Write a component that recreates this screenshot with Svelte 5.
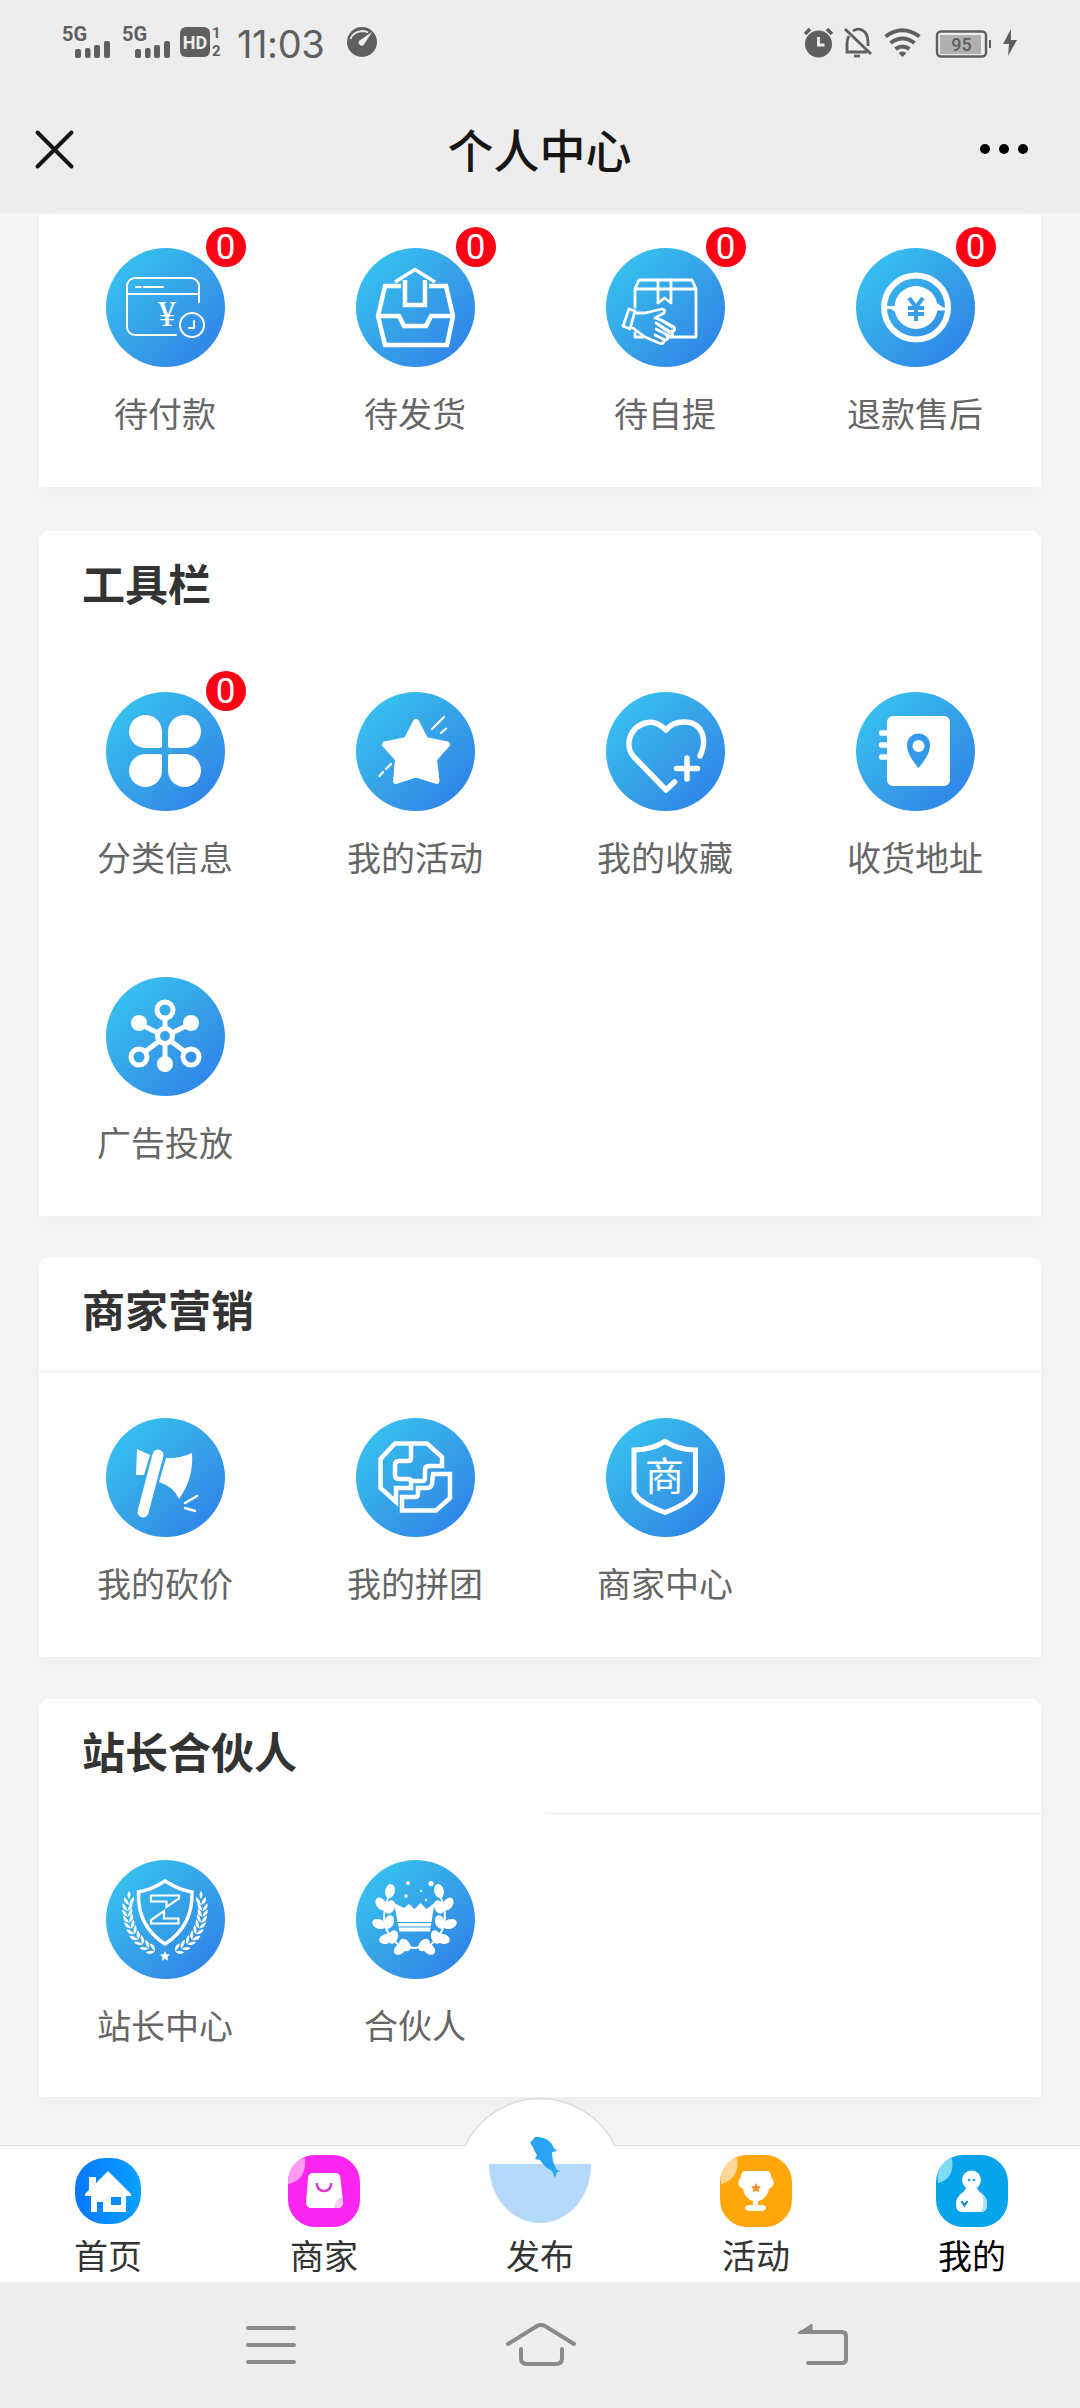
<script lang="ts">
	type Entry = { icon: string; label: string; badge?: number };
	type Section = { id: string; title?: string; divider?: 'full' | 'half'; items: Entry[] };

	const sections: Section[] = [
		{
			id: 'orders',
			items: [
				{ icon: 'pay', label: '待付款', badge: 0 },
				{ icon: 'send', label: '待发货', badge: 0 },
				{ icon: 'pickup', label: '待自提', badge: 0 },
				{ icon: 'refund', label: '退款售后', badge: 0 }
			]
		},
		{
			id: 'tools',
			title: '工具栏',
			items: [
				{ icon: 'clover', label: '分类信息', badge: 0 },
				{ icon: 'star', label: '我的活动' },
				{ icon: 'heart', label: '我的收藏' },
				{ icon: 'address', label: '收货地址' },
				{ icon: 'hub', label: '广告投放' }
			]
		},
		{
			id: 'marketing',
			title: '商家营销',
			divider: 'full',
			items: [
				{ icon: 'axe', label: '我的砍价' },
				{ icon: 'puzzle', label: '我的拼团' },
				{ icon: 'merchant', label: '商家中心' }
			]
		},
		{
			id: 'partner',
			title: '站长合伙人',
			divider: 'half',
			items: [
				{ icon: 'master', label: '站长中心' },
				{ icon: 'crown', label: '合伙人' }
			]
		}
	];

	const tabs = [
		{ icon: 'home', label: '首页' },
		{ icon: 'shop', label: '商家' },
		{ icon: 'publish', label: '发布' },
		{ icon: 'trophy', label: '活动' },
		{ icon: 'me', label: '我的' }
	];

	let active = $state('me');

	// left half of the wreath: x, y, direction of growth in degrees
	const wreath = [
		[22, 41, 0],
		[20.5, 47, -2],
		[20.5, 53, -6],
		[21.5, 59, -10],
		[23, 65, -16],
		[25.5, 71, -24],
		[29, 77, -34],
		[33.5, 82, -44],
		[39, 87, -54],
		[45, 90.5, -64]
	];

	// left half of the leaf ring round the crown: x, y, angle
	const leaves = [
		[34, 31, 15],
		[25, 44, -35],
		[34, 47, 25],
		[23, 64, -70],
		[33, 62, 20],
		[30, 79, 75],
		[37, 77, 20],
		[44, 89, 50],
		[49, 85, -40]
	];
</script>

{#snippet icon(name: string)}
	<svg class="glyph" viewBox="0 0 119 119">
		{#if name === 'pay'}
			<g class="line" stroke-width="2">
				<path d="M93 54V38a8 8 0 0 0-8-8H29a8 8 0 0 0-8 8v41a8 8 0 0 0 8 8h41M21 46h72M30 39h5M38 39h19" />
				<circle cx="86" cy="77" r="12" />
				<path d="M88 73v7h-5" />
			</g>
			<text class="serif" x="61" y="78" font-size="36">¥</text>
		{:else if name === 'send'}
			<g class="line sharp" stroke-width="4.5">
				<path d="M45 38H29l-7 30 7 29h62l6-29-7-30H73" />
				<path d="M22 68h21l5 10h22l5-10h22" />
				<path d="M49 32v25h20V32" />
				<path d="M39 34l20-12.500 20 12.500" stroke-width="3.500" />
			</g>
		{:else if name === 'pickup'}
			<g class="line" stroke-width="2.800">
				<path d="M29 59V41l4-9h53l4 9v48H64M29 41h61M29 85v4h8" />
				<path d="M52 32v23l6.500-5 6.500 5V32" />
				<path d="M23 61l6 2-5 18-7-3z" />
				<path d="M30 65l9 0 17-4q4 1 2 4l-9 5 6 2 13 7q2 4-2 4M50 75l16 10q2 4-3 3L50 81M61 88q2 4-2 4l-10-5M58 92q0 5-5 3l-14-6-12-9" />
				<path d="M55 72l11 7M53 77l11 8" />
			</g>
		{:else if name === 'refund'}
			<circle class="line" cx="60" cy="59.500" r="32" stroke-width="6" />
			<circle class="fill" cx="60" cy="59.500" r="21.500" />
			<path class="fill" d="M32 59l13 9-2-9zM88 60L74 50l2 11z" />
			<path class="line" d="M32 59.500h7M81 61h7" stroke-width="3" />
			<path class="ink" d="M53 50l7 9 7-9M60 59v14M52 60h16M52 66h16" stroke-width="4" />
		{:else if name === 'clover'}
			<g class="fill">
				<path d="M39.500 23A16.500 16.500 0 0 1 56 39.500V54q0 2-2 2H39.500a16.500 16.500 0 0 1 0-33z" />
				<path d="M78.500 23A16.500 16.500 0 0 0 62 39.500V54q0 2 2 2h14.500a16.500 16.500 0 0 0 0-33z" />
				<path d="M39.500 95A16.500 16.500 0 0 0 56 78.500V64q0-2-2-2H39.500a16.500 16.500 0 0 0 0 33z" />
				<path d="M78.500 95A16.500 16.500 0 0 1 62 78.500V64q0-2 2-2h14.500a16.500 16.500 0 0 1 0 33z" />
			</g>
		{:else if name === 'star'}
			<path class="solid" d="M60 30l9.500 18L91 52.500 78 67l2.500 22L60 82.500 40 89l2-22-13-14.500L50.500 48z" stroke-width="6" />
			<path class="line" d="M76 37l12-12M85 41l5-4.500M35 72l-5 5M27 80l-3.500 4" stroke-width="2.200" />
		{:else if name === 'heart'}
			<g class="line" stroke-width="5.500">
				<path d="M94 64C102 47 96 31 80 30Q67 29 60 38Q51 29 42 30.500C23 34 18 54 28 65L60 98l8.500-8" />
				<path d="M81 66v21M70.500 76.500h21" />
			</g>
		{:else if name === 'address'}
			<rect class="fill" x="31" y="24" width="63" height="70" rx="6" />
			<path class="line" d="M25.500 41H32M25.500 53H32M25.500 65H32" stroke-width="5.500" />
			<path class="hole" d="M62.500 76C54 66 51 59 51 53a11.500 11.500 0 0 1 23 0c0 6-3 13-11.500 23z" />
			<circle class="fill" cx="62.500" cy="54" r="6" />
		{:else if name === 'hub'}
			<g class="line" stroke-width="5">
				<circle cx="59" cy="59" r="7.500" />
				<circle cx="59" cy="33" r="8" />
				<circle cx="33" cy="80" r="8" />
				<circle cx="85" cy="80" r="8" />
				<path d="M59 42v9M59 67v12M40 50l12 6M78 50l-12 6M40 74l12-9M78 74l-12-9" />
			</g>
			<g class="fill">
				<circle cx="33" cy="46" r="8" />
				<circle cx="85" cy="46" r="8" />
				<circle cx="59" cy="87" r="8" />
			</g>
		{:else if name === 'axe'}
			<path class="line" d="M52 37L37 94" stroke-width="11" />
			<path class="fill" d="M31 31l13 6-6 20h-8zM60 40q13 1 26-5 2 25-13 46-5-12-20-17z" />
			<path class="line" d="M79 85l12-7M79 90l10 3" stroke-width="2.500" />
		{:else if name === 'puzzle'}
			<g class="line sharp" stroke-width="4.500">
				<path d="M55 25v15q0 3-3 3h-9q-4 0-4 4v10q0 4 4 4h9q3 0 3 3v6H40v14L24.500 70V41L39 25.500h32L86 39v9H73q-4 0-4 4v8q0 3-3 3H55" />
				<path d="M77 56h17v24L80 92.500H46V79h13q3 0 3-3v-6h9q4 0 5-4z" />
			</g>
		{:else if name === 'merchant'}
			<path class="line sharp" d="M59 23.500Q45 32 28 32v42q5 11 31 20.500Q84 85 89.500 74V32Q73 32 59 23.500z" stroke-width="5" />
			<text x="58.500" y="72" font-size="39">商</text>
		{:else if name === 'master'}
			<g class="line sharp">
				<path d="M59 21Q45 30 32.500 32 31 66 59 84 87 66 86 32 73 30 59 21z" stroke-width="3.500" />
				<path d="M45 35.500h28v3L60.500 47v-5.500H45zM58 51v7.500h14.500v5H45V60z" stroke-width="2.200" />
			</g>
			{#each ['', 'translate(118 0) scale(-1 1)'] as flip}
				<g transform={flip}>
					{#each wreath as [x, y, angle]}
						<g class="fill" transform="translate({x} {y}) rotate({angle})">
							<path d="M1 4Q-5 2-4-4 0-2 1 4zM1 4Q7 2 6-4 2-2 1 4z" />
						</g>
					{/each}
					<path class="fill" d="M23 31q-3 4 0 8 3-4 0-8z" />
				</g>
			{/each}
			<path class="fill" d="M59 91l1.500 3.300 3.500.3-2.600 2.500.8 3.600-3.200-2-3.200 2 .8-3.600-2.600-2.500 3.500-.3z" />
		{:else if name === 'crown'}
			<path class="fill" d="M38 43l10 5 5-4 5.500 5 6-6 6 6 8-6-4.500 28.500H43.500z" />
			<path class="cut" d="M42 62.500h34M42 67h34" />
			{#each ['', 'translate(117 0) scale(-1 1)'] as flip}
				<g transform={flip}>
					<path class="line" d="M32 38Q20 68 44 86l15 2" stroke-width="2" />
					{#each leaves as [x, y, angle]}
						<ellipse class="fill" rx="4.800" ry="7" transform="translate({x} {y}) rotate({angle})" />
					{/each}
				</g>
			{/each}
			<g class="fill">
				<circle cx="52" cy="23" r="2" />
				<circle cx="75" cy="23.500" r="2.600" />
				<circle cx="50" cy="36" r="1.700" />
				<circle cx="65" cy="31" r="1.200" />
				<circle cx="70" cy="40" r="1.200" />
			</g>
		{/if}
	</svg>
{/snippet}

{#snippet tabIcon(name: string)}
	{#if name === 'home'}
		<svg class="tab-icon" viewBox="0 0 72 72">
			<defs>
				<linearGradient id="home-bg">
					<stop offset="0" stop-color="#0878ff" />
					<stop offset="1" stop-color="#0aa0ff" />
				</linearGradient>
			</defs>
			<rect x="3" y="3" width="66" height="66" rx="30" fill="url(#home-bg)" />
			<path class="fill" d="M17 22h7v6l12-12 23 23v2h-5v16H31V47h-6v10h-6V41h-6v-2l4-4z" />
			<rect x="39" y="42" width="10" height="8" fill="#0b8cff" />
		</svg>
	{:else if name === 'shop'}
		<svg class="tab-icon" viewBox="0 0 72 72">
			<rect width="72" height="72" rx="27" fill="#ff25f0" />
			<path d="M3 14Q8 5 17 3q2 22-17 26 0-9 3-15z" fill="#ff9af5" />
			<path class="fill" d="M25 18h22q5 0 5.500 5L55 47q0 6-6 6H24q-6 0-6-6l2-24q.5-5 5-5z" />
			<path d="M54 42q-6 2-8 11h3q6 0 6-6z" fill="#ffc6fa" />
			<path d="M28.500 28q1 8 7.500 8t7.500-8" fill="none" stroke="#d63fc9" stroke-width="2.500" />
		</svg>
	{:else if name === 'publish'}
		<svg class="bowl" viewBox="0 0 102 86">
			<path d="M0 27h102C102 62 78 86 51 86S0 62 0 27z" fill="#b4d9fb" />
			<path
				d="M41 6l5-6q11-1 17 7 1 4 5 7l-5 1q0 10 5 18l4 1-4 1-2 6-3-7q-8-4-12-11l-5-1 2-4q-3-4-4-8z"
				fill="#29a4f2"
			/>
		</svg>
	{:else if name === 'trophy'}
		<svg class="tab-icon" viewBox="0 0 72 72">
			<rect width="72" height="72" rx="27" fill="#ffa60a" />
			<path d="M3 14Q8 5 17 3q3 21-16 26-1-9 2-15z" fill="#ffd796" />
			<path
				class="fill"
				d="M24 16h24q3 1 3 6 4 3 2 9l-4 3q-2 10-11 12v4h5q3 1 3 3t-3 3H28q-3-1-3-3t3-3h5v-4q-8-2-10-12l-4-3q-2-6 2-9 0-5 3-6z"
			/>
			<path d="M36 28l1.500 3 3.500.4-2.500 2.500.6 3.600-3.100-1.700-3.100 1.700.6-3.600-2.500-2.500 3.500-.4z" fill="#f0922a" />
		</svg>
	{:else}
		<svg class="tab-icon" viewBox="0 0 72 72">
			<rect width="72" height="72" rx="27" fill="#07a4ec" />
			<path d="M3 14Q8 5 16 3q3 21-14 25-1-8 1-14z" fill="#7fdcf4" />
			<circle class="fill" cx="35.500" cy="25" r="9.500" />
			<path class="fill" d="M30 33h11q1 3 4 5 6 4 6 11 0 8-6 8H26q-6 0-6-8 0-7 6-11 3-2 4-5z" />
			<path d="M46 39q5 4 5 10 0 8-6 8 4-8 1-18z" fill="#a9e2fb" />
			<circle cx="33" cy="25" r="1.300" fill="#07a4ec" />
			<circle cx="38" cy="25" r="1.300" fill="#07a4ec" />
			<path d="M25.500 46l3 4.500 3-4.500" fill="none" stroke="#1a8fd0" stroke-width="2.200" />
		</svg>
	{/if}
{/snippet}

<div class="page">
	<header>
		<div class="status">
			{#each [1, 2] as sim (sim)}
				<div class="signal">
					<span>5G</span>
					<svg viewBox="0 0 35 17">
						<rect y="8" width="6" height="9" rx="2" />
						<rect x="10" y="7" width="5.500" height="10" rx="2" />
						<rect x="19" y="4" width="6" height="13" rx="2" />
						<rect x="29" width="6" height="17" rx="2" />
					</svg>
				</div>
			{/each}
			<div class="hd">
				<span class="hd-box">HD</span>
				<span class="hd-sims"><span>1</span><span>2</span></span>
			</div>
			<time>11:03</time>
			<svg class="gauge" viewBox="0 0 30 30">
				<circle cx="15" cy="15" r="15" />
				<path d="M3.500 12Q6 5 15 4q4 0 6 1.500" fill="none" stroke="#ededed" stroke-width="1.800" />
				<path d="M25 5L12.500 13.500a3 3 0 0 0 4.500 4z" fill="#ededed" />
			</svg>
			<svg class="system" viewBox="0 0 216 32">
				<g>
					<circle cx="15.500" cy="17" r="13.500" />
					<path d="M2 7l5-5M29 7l-5-5" stroke="#5f5f5f" stroke-width="3.500" />
					<path d="M15.500 10v8h6" fill="none" stroke="#ededed" stroke-width="2.800" />
				</g>
				<g fill="none" stroke="#5f5f5f" stroke-width="2.800">
					<path d="M42 2l26 25M46 9q-2 3-2 8v8h20M50 4q4-3 9-1 6 3 6 12v4" />
					<path d="M51 29h6" />
				</g>
				<g fill="none" stroke="#5f5f5f" stroke-width="4">
					<path d="M82.500 9.500q17-12.500 34 0M87.500 16q12-9 24 0M92.500 22q7-5 14 0" />
				</g>
				<path d="M95.500 26q4-3 8 0l-4 4z" />
				<rect x="134" y="4.500" width="49" height="25" rx="4" fill="none" stroke="#5f5f5f" stroke-width="2.400" />
				<rect x="137" y="8" width="41" height="19" fill="#b0b0b0" />
				<path d="M186 13h2v8h-2z" />
				<text x="158.500" y="24" font-size="18">95</text>
				<path d="M208 2l-8 15h6l-1 12 9-16h-6z" />
			</svg>
		</div>
		<div class="title-bar">
			<svg class="close" viewBox="0 0 37 37"><path d="M1.500 1.500l34 34M35.500 1.500l-34 34" /></svg>
			<h1>个人中心</h1>
			<svg class="more" viewBox="0 0 48 10">
				<circle cx="5" cy="5" r="5" />
				<circle cx="24" cy="5" r="5" />
				<circle cx="43" cy="5" r="5" />
			</svg>
		</div>
	</header>

	<main>
		{#each sections as section (section.id)}
			<section class="card {section.id}">
				{#if section.title}
					<div class="card-head {section.divider ?? ''}">
						<h2>{section.title}</h2>
					</div>
				{/if}
				<div class="grid">
					{#each section.items as item (item.label)}
						<div class="item">
							<div class="circle">
								{@render icon(item.icon)}
								{#if item.badge !== undefined}
									<span class="badge">{item.badge}</span>
								{/if}
							</div>
							<span class="label">{item.label}</span>
						</div>
					{/each}
				</div>
			</section>
		{/each}
	</main>

	<nav class="tabs">
		{#each tabs as tab (tab.icon)}
			<button class={tab.icon} class:active={active === tab.icon} onclick={() => (active = tab.icon)}>
				{#if tab.icon === 'publish'}
					<svg class="bump" viewBox="0 0 166 50">
						<path d="M8 50V48a83 83 0 0 1 150 0v2z" fill="#fff" />
						<path d="M8 48a83 83 0 0 1 150 0" fill="none" stroke="#dcdcdc" stroke-width="1.500" />
					</svg>
				{/if}
				{@render tabIcon(tab.icon)}
				<span>{tab.label}</span>
			</button>
		{/each}
	</nav>

	<div class="system-nav">
		<svg viewBox="0 0 50 38"><path d="M2 2h46M2 19h46M2 36h46" /></svg>
		<svg class="sys-home" viewBox="0 0 70 44">
			<path d="M2 22L31 4q4-2 8 0l29 18M15 27v9q0 6 6 6h29q6 0 6-6v-9" />
		</svg>
		<svg class="sys-back" viewBox="0 0 52 42">
			<path d="M4 10h41q4 0 4 4v23q0 4-4 4H11" />
			<path class="arrow" d="M1 11L15 2v9z" />
		</svg>
	</div>
</div>

<style>
	:global(body) {
		margin: 0;
		background: #f4f4f4;
	}

	.page {
		display: flex;
		flex-direction: column;
		width: 1080px;
		height: 2408px;
		overflow: hidden;
		background: #f4f4f4;
		font-family: Roboto, 'Noto Sans CJK SC', sans-serif;
	}

	svg {
		display: block;
		flex: none;
		overflow: visible;
	}

	header {
		height: 213px;
		background: #ededed;
	}

	.status {
		display: flex;
		align-items: flex-start;
		height: 84px;
		padding: 27px 61px 0 62px;
		box-sizing: border-box;
		color: #5f5f5f;
		fill: #5f5f5f;
	}

	.signal {
		width: 60px;
		font-size: 20px;
		font-weight: 700;
		line-height: 14px;
	}

	.signal span {
		display: block;
	}

	.signal svg {
		width: 35px;
		height: 17px;
		margin-left: 13px;
	}

	.hd {
		display: flex;
		gap: 2px;
		width: 57px;
		margin-left: -2px;
	}

	.hd-box {
		width: 30px;
		height: 30px;
		border-radius: 6px;
		background: #5f5f5f;
		color: #ededed;
		font-size: 18px;
		font-weight: 700;
		line-height: 31px;
		text-align: center;
	}

	.hd-sims {
		display: flex;
		flex-direction: column;
		margin-top: -3px;
		font-size: 15px;
		font-weight: 700;
		line-height: 18px;
		text-align: center;
	}

	time {
		width: 110px;
		font-family: Inter, sans-serif;
		font-size: 38px;
		line-height: 35px;
		letter-spacing: -0.4px;
	}

	.gauge {
		width: 30px;
		height: 30px;
	}

	.system {
		width: 216px;
		height: 32px;
		margin-left: auto;
	}

	.system text {
		font-weight: 500;
		text-anchor: middle;
	}

	.title-bar {
		display: flex;
		align-items: center;
		justify-content: space-between;
		height: 130px;
		padding: 0 52px 0 36px;
	}

	.close {
		width: 37px;
		height: 37px;
		fill: none;
		stroke: #161616;
		stroke-width: 4;
		stroke-linecap: round;
	}

	.more {
		width: 48px;
		height: 10px;
	}

	h1 {
		margin: 5px 0 0 26px;
		color: #161616;
		font-size: 46px;
		font-weight: 500;
		line-height: 60px;
	}

	main {
		flex: 1;
		min-height: 0;
		padding: 1px 39px 0;
		background: #f4f4f4;
	}

	.card {
		border-radius: 10px 10px 2px 2px;
		background: #fff;
		box-shadow: 0 8px 24px rgba(0, 0, 0, 0.03);
	}

	.orders {
		border-radius: 0 0 2px 2px;
		padding-top: 34px;
	}

	.tools {
		margin-top: 44px;
	}

	.marketing {
		margin-top: 41px;
	}

	.partner {
		margin-top: 42px;
	}

	.card-head {
		height: 116px;
		margin-bottom: 45px;
		background: no-repeat right bottom / 0 3px linear-gradient(#f6f6f6, #f6f6f6);
	}

	.card-head.full {
		background-size: 100% 3px;
	}

	.card-head.half {
		background-size: 496px 3px;
	}

	h2 {
		margin: 0;
		padding-left: 43px;
		color: #333;
		font-size: 43px;
		font-weight: 700;
		line-height: 110px;
	}

	.grid {
		display: grid;
		grid-template-columns: repeat(4, 1fr);
		row-gap: 98px;
		padding: 0 1px 52px;
	}

	.partner .grid {
		padding-bottom: 50px;
	}

	.item {
		display: flex;
		flex-direction: column;
		align-items: center;
		gap: 28px;
	}

	.circle {
		position: relative;
		width: 119px;
		height: 119px;
		border-radius: 50%;
		background: linear-gradient(135deg, #36c0ef 12%, #36a2e8 50%, #2f84e8 90%);
	}

	.glyph {
		width: 119px;
		height: 119px;
	}

	.glyph text {
		fill: #fff;
		text-anchor: middle;
	}

	.glyph .serif {
		font-family: 'Liberation Serif', serif;
	}

	.line {
		fill: none;
		stroke: #fff;
		stroke-linecap: round;
		stroke-linejoin: round;
	}

	.sharp {
		stroke-linecap: butt;
		stroke-linejoin: miter;
	}

	.fill {
		fill: #fff;
	}

	.solid {
		fill: #fff;
		stroke: #fff;
		stroke-linejoin: round;
	}

	.hole {
		fill: #3499e8;
	}

	.ink,
	.cut {
		fill: none;
		stroke: #389de8;
	}

	.badge {
		position: absolute;
		top: -21px;
		right: -21px;
		min-width: 40px;
		height: 40px;
		border-radius: 20px;
		background: #ff0014;
		color: #fff;
		font-size: 35px;
		line-height: 41px;
		text-align: center;
	}

	.label {
		color: #666;
		font-size: 34px;
		line-height: 40px;
	}

	.tabs {
		display: grid;
		grid-template-columns: repeat(5, 1fr);
		grid-template-rows: 136px;
		height: 137px;
		border-top: 1px solid #dcdcdc;
		box-sizing: border-box;
		background: #fff;
	}

	.tabs button {
		position: relative;
		display: flex;
		flex-direction: column;
		align-items: center;
		justify-content: flex-end;
		gap: 10px;
		min-height: 0;
		padding: 0 0 5px;
		border: 0;
		background: none;
		color: #333;
		font: inherit;
		font-size: 34px;
		line-height: 40px;
	}

	.tabs button.active {
		color: #000;
	}

	.tab-icon {
		width: 72px;
		height: 72px;
	}

	.bowl {
		position: relative;
		width: 102px;
		height: 86px;
		margin-bottom: 4px;
	}

	.bump {
		position: absolute;
		top: -48px;
		left: 25px;
		width: 166px;
		height: 50px;
	}

	.system-nav {
		display: flex;
		align-items: flex-start;
		height: 126px;
		padding: 44px 231px 0 246px;
		box-sizing: border-box;
		background: #eee;
		fill: none;
		stroke: #8a8a8a;
		stroke-width: 4;
		stroke-linecap: round;
		stroke-linejoin: round;
	}

	.system-nav svg {
		width: 50px;
		height: 38px;
	}

	.system-nav .sys-home {
		width: 70px;
		height: 44px;
		margin: -4px auto 0 210px;
	}

	.system-nav .sys-back {
		width: 52px;
		height: 42px;
		margin-top: -4px;
	}

	.system-nav .arrow {
		fill: #8a8a8a;
		stroke-width: 1;
	}
</style>
